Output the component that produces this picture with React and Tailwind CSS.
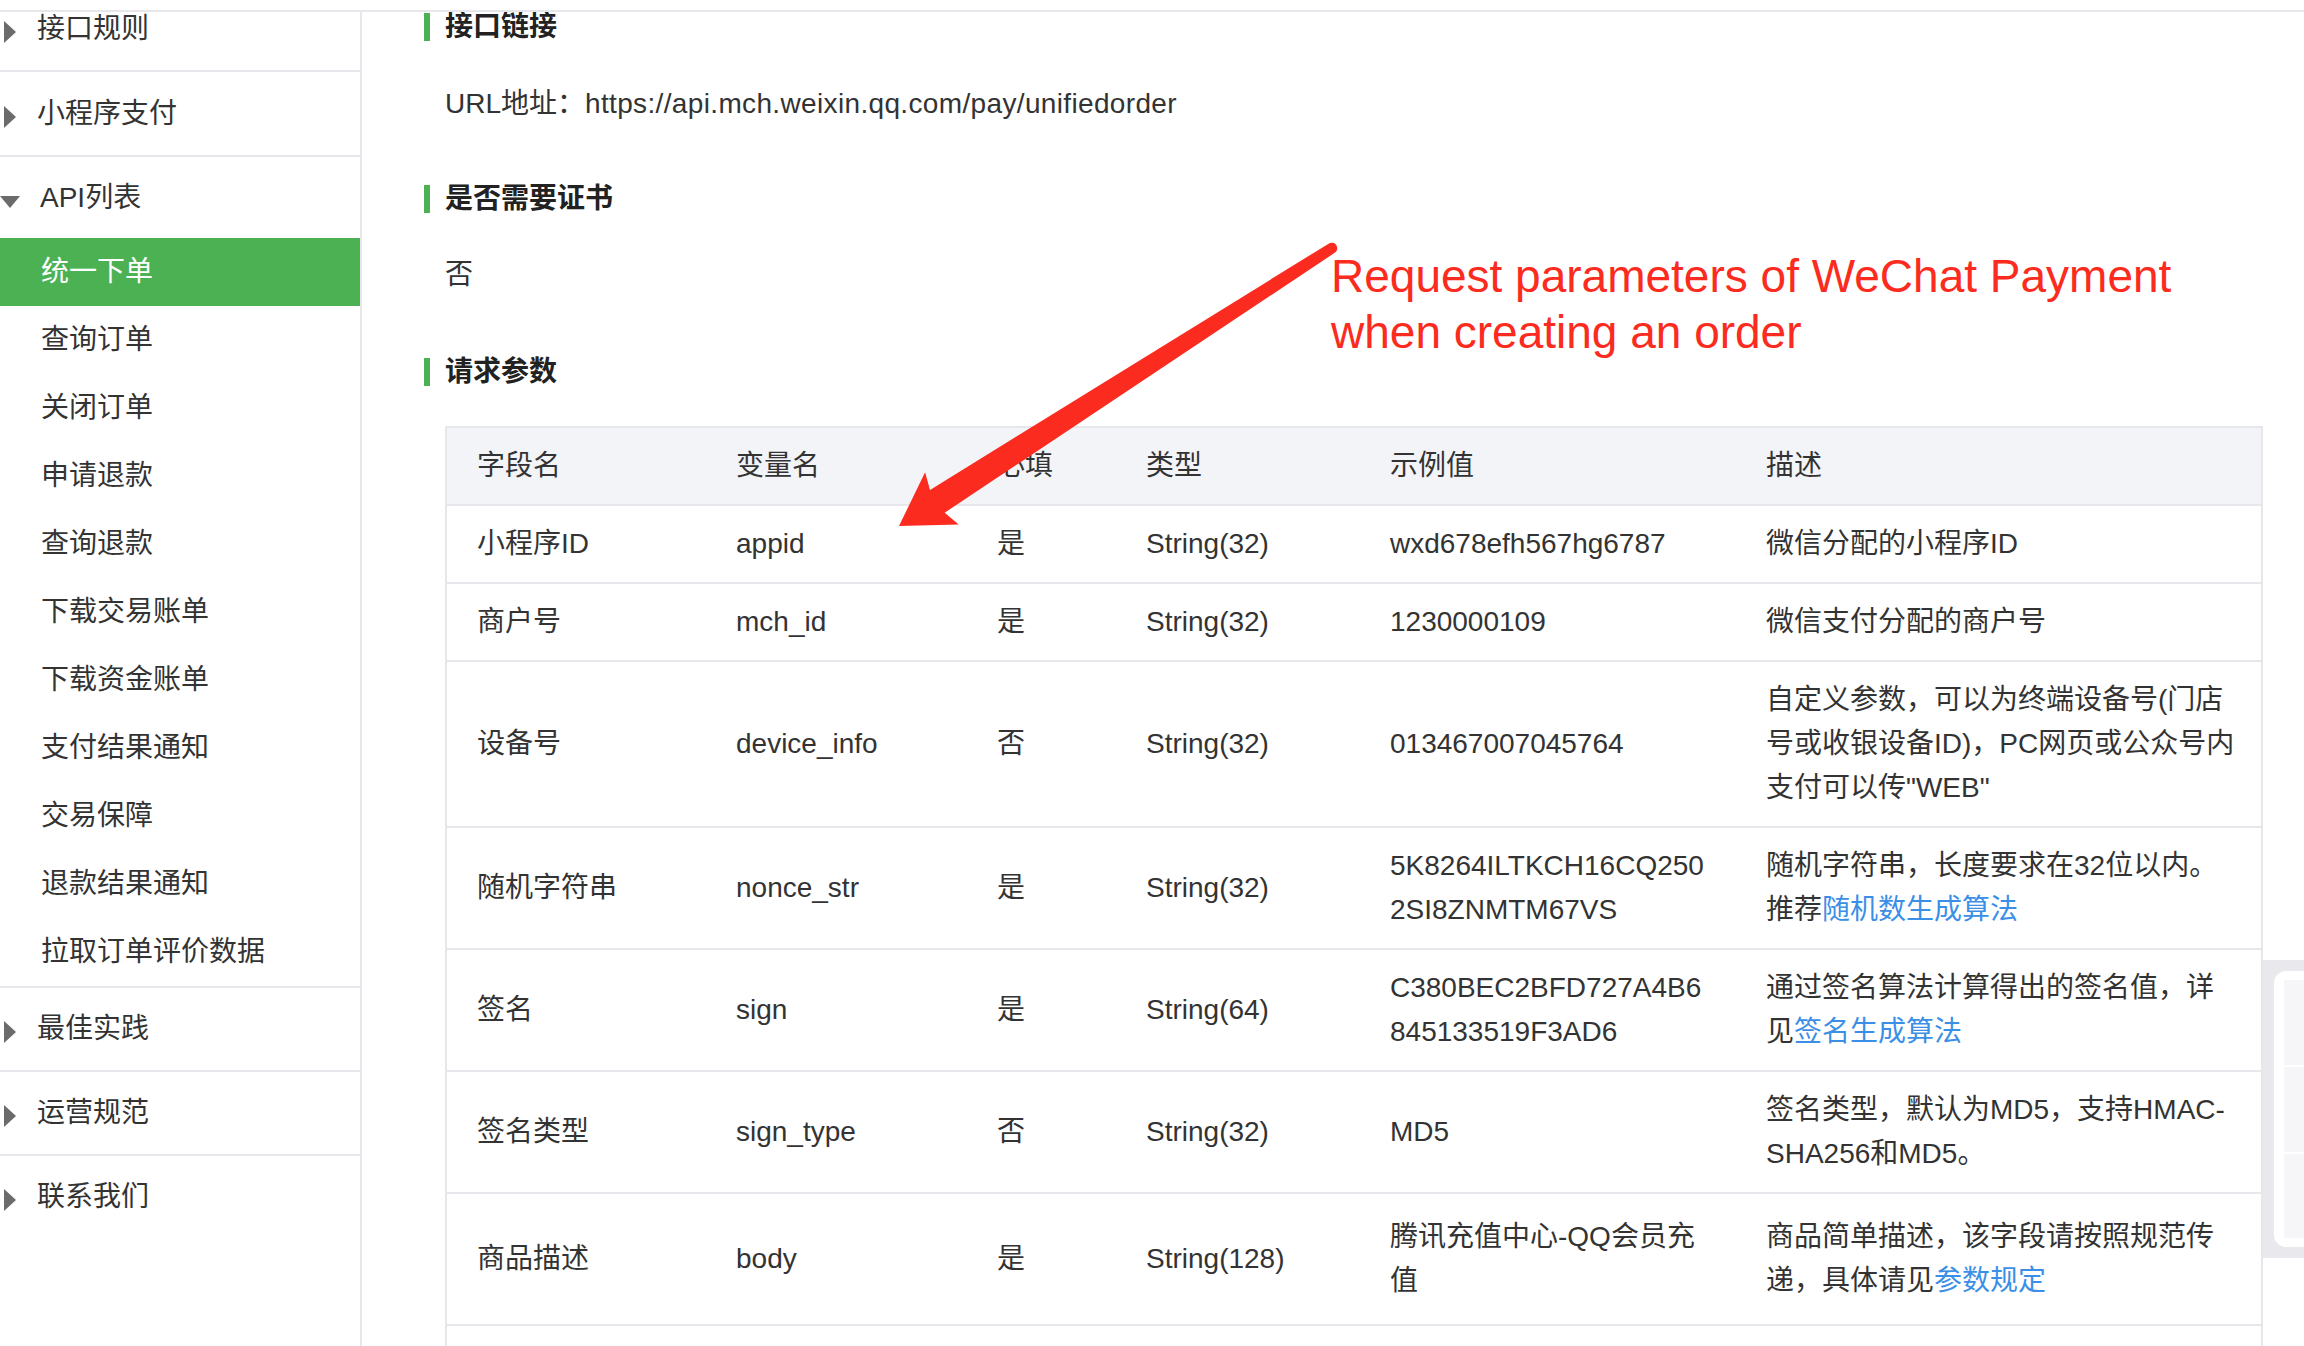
import React from "react";

const Tri = () => (
  <svg width="12" height="22" viewBox="0 0 12 22" className="absolute left-[4px] top-1/2 -translate-y-1/2 mt-[3px]">
    <polygon points="0,0 12,11 0,22" fill="#6b6b6b" />
  </svg>
);

const TriDown = () => (
  <svg width="20" height="12" viewBox="0 0 20 12" className="absolute left-0 top-1/2 -translate-y-1/2 mt-[4px]">
    <polygon points="0,0 20,0 10,12" fill="#6b6b6b" />
  </svg>
);

function TopItem({ label, h = "h-[85px]", border = true }) {
  return (
    <div className={`relative flex items-center ${h} ${border ? "border-b-2 border-[#e6e6eb]" : ""}`}>
      <Tri />
      <span className="pl-[37px] text-[28px] leading-[44px] text-[#333]">{label}</span>
    </div>
  );
}

const subItems = [
  "统一下单",
  "查询订单",
  "关闭订单",
  "申请退款",
  "查询退款",
  "下载交易账单",
  "下载资金账单",
  "支付结果通知",
  "交易保障",
  "退款结果通知",
  "拉取订单评价数据",
];

const L = ({ children }) => <span className="text-[#3b8fe6]">{children}</span>;

const rows = [
  { h: "", c: ["小程序ID", "appid", "是", "String(32)", "wxd678efh567hg6787", "微信分配的小程序ID"] },
  { h: "", c: ["商户号", "mch_id", "是", "String(32)", "1230000109", "微信支付分配的商户号"] },
  {
    h: "",
    c: [
      "设备号",
      "device_info",
      "否",
      "String(32)",
      "013467007045764",
      <>
        自定义参数，可以为终端设备号(门店
        <br />
        号或收银设备ID)，PC网页或公众号内
        <br />
        支付可以传"WEB"
      </>,
    ],
  },
  {
    h: "",
    c: [
      "随机字符串",
      "nonce_str",
      "是",
      "String(32)",
      <>
        5K8264ILTKCH16CQ250
        <br />
        2SI8ZNMTM67VS
      </>,
      <>
        随机字符串，长度要求在32位以内。
        <br />
        推荐<L>随机数生成算法</L>
      </>,
    ],
  },
  {
    h: "",
    c: [
      "签名",
      "sign",
      "是",
      "String(64)",
      <>
        C380BEC2BFD727A4B6
        <br />
        845133519F3AD6
      </>,
      <>
        通过签名算法计算得出的签名值，详
        <br />
        见<L>签名生成算法</L>
      </>,
    ],
  },
  {
    h: "",
    c: [
      "签名类型",
      "sign_type",
      "否",
      "String(32)",
      "MD5",
      <>
        签名类型，默认为MD5，支持HMAC-
        <br />
        SHA256和MD5。
      </>,
    ],
  },
  {
    h: "h-[132px]",
    c: [
      "商品描述",
      "body",
      "是",
      "String(128)",
      <>
        腾讯充值中心-QQ会员充
        <br />值
      </>,
      <>
        商品简单描述，该字段请按照规范传
        <br />
        递，具体请见<L>参数规定</L>
      </>,
    ],
  },
];

const GRID = "grid grid-cols-[259px_261px_149px_244px_376px_525px]";

function Heading({ children }) {
  return (
    <div className="flex items-center h-[30px] gap-[15px] pl-[62px]">
      <div className="w-[6px] h-[28px] bg-[#4bb153]" />
      <span className="text-[28px] leading-[30px] font-bold text-[#222]">{children}</span>
    </div>
  );
}

export default function App() {
  return (
    <div className="relative w-[2304px] h-[1346px] overflow-hidden bg-white font-['Liberation_Sans','Noto_Sans_CJK_SC',sans-serif] text-[#333]">
      <div className="h-[10px]" />
      <div className="flex h-[1336px] border-t-2 border-[#e6e6eb]">
        <aside className="w-[362px] shrink-0 border-r-2 border-[#e6e6eb] overflow-hidden">
          <div className="-mt-[25px]">
            <TopItem label="接口规则" />
            <TopItem label="小程序支付" />
            <div className="border-b-2 border-[#e6e6eb]">
              <div className="relative flex items-center h-[81px]">
                <TriDown />
                <span className="pl-[40px] text-[28px] leading-[44px] text-[#333]">API列表</span>
              </div>
              {subItems.map((s, i) => (
                <div
                  key={s}
                  className={`flex items-center h-[68px] pl-[41px] text-[28px] leading-[44px] ${
                    i === 0 ? "bg-[#4bb153] text-white" : "text-[#333]"
                  }`}
                >
                  {s}
                </div>
              ))}
            </div>
            <TopItem label="最佳实践" h="h-[84px]" />
            <TopItem label="运营规范" h="h-[84px]" />
            <TopItem label="联系我们" h="h-[82px]" border={false} />
          </div>
        </aside>

        <main className="relative flex-1 overflow-hidden">
          <Heading>接口链接</Heading>
          <p className="mt-[40px] pl-[83px] text-[28px] leading-[44px] text-[#333]">
            URL地址：<span className="tracking-[0.35px]">https://api.mch.weixin.qq.com/pay/unifiedorder</span>
          </p>
          <div className="mt-[58px]">
            <Heading>是否需要证书</Heading>
          </div>
          <p className="mt-[39px] pl-[83px] text-[28px] leading-[44px] text-[#333]">否</p>
          <div className="mt-[60px]">
            <Heading>请求参数</Heading>
          </div>

          <div className="mt-[39px] ml-[83px] w-[1818px] border-2 border-b-0 border-[#e6e6eb] text-[28px] leading-[44px] text-[#333]">
            <div className={`${GRID} bg-[#f3f4f8] border-b-2 border-[#e6e6eb] h-[78px]`}>
              {["字段名", "变量名", "必填", "类型", "示例值", "描述"].map((t) => (
                <div key={t} className="flex items-center pl-[30px]">
                  {t}
                </div>
              ))}
            </div>
            {rows.map((r, i) => (
              <div key={i} className={`${GRID} border-b-2 border-[#e6e6eb] ${r.h}`}>
                {r.c.map((c, j) => (
                  <div key={j} className="flex items-center pl-[30px] py-[16px] whitespace-nowrap">
                    <div>{c}</div>
                  </div>
                ))}
              </div>
            ))}
            <div className="h-[120px]" />
          </div>

          {/* floating side widget */}
          <div className="absolute left-[1901px] top-[948px] w-[41px] h-[298px] bg-[#e8e8ed]">
            <div className="absolute left-[11px] top-[11px] w-[60px] h-[276px] rounded-[12px] bg-white">
              <div className="absolute left-[10px] top-[9px] right-0 h-[85px] bg-[#f6f6f8]" />
              <div className="absolute left-[10px] top-[96px] right-0 h-[85px] bg-[#f6f6f8]" />
              <div className="absolute left-[10px] top-[183px] right-0 h-[84px] bg-[#f6f6f8]" />
            </div>
          </div>
        </main>
      </div>

      {/* red annotation */}
      <svg
        className="absolute left-0 top-0 pointer-events-none"
        width="2304"
        height="1346"
        viewBox="0 0 2304 1346"
      >
        <path
          d="M 1329 243.4 L 930 490 L 925.1 472.3 L 899 526 L 958.7 524.5 L 944.7 512.7 L 1335 252.6 A 5.5 5.5 0 0 0 1329 243.4 Z"
          fill="#fc2b20"
        />
      </svg>
      <div className="absolute left-[1331px] top-[248px] text-[46px] leading-[56px] text-[#fc2b20] whitespace-nowrap">
        Request parameters of WeChat Payment
        <br />
        when creating an order
      </div>
    </div>
  );
}
